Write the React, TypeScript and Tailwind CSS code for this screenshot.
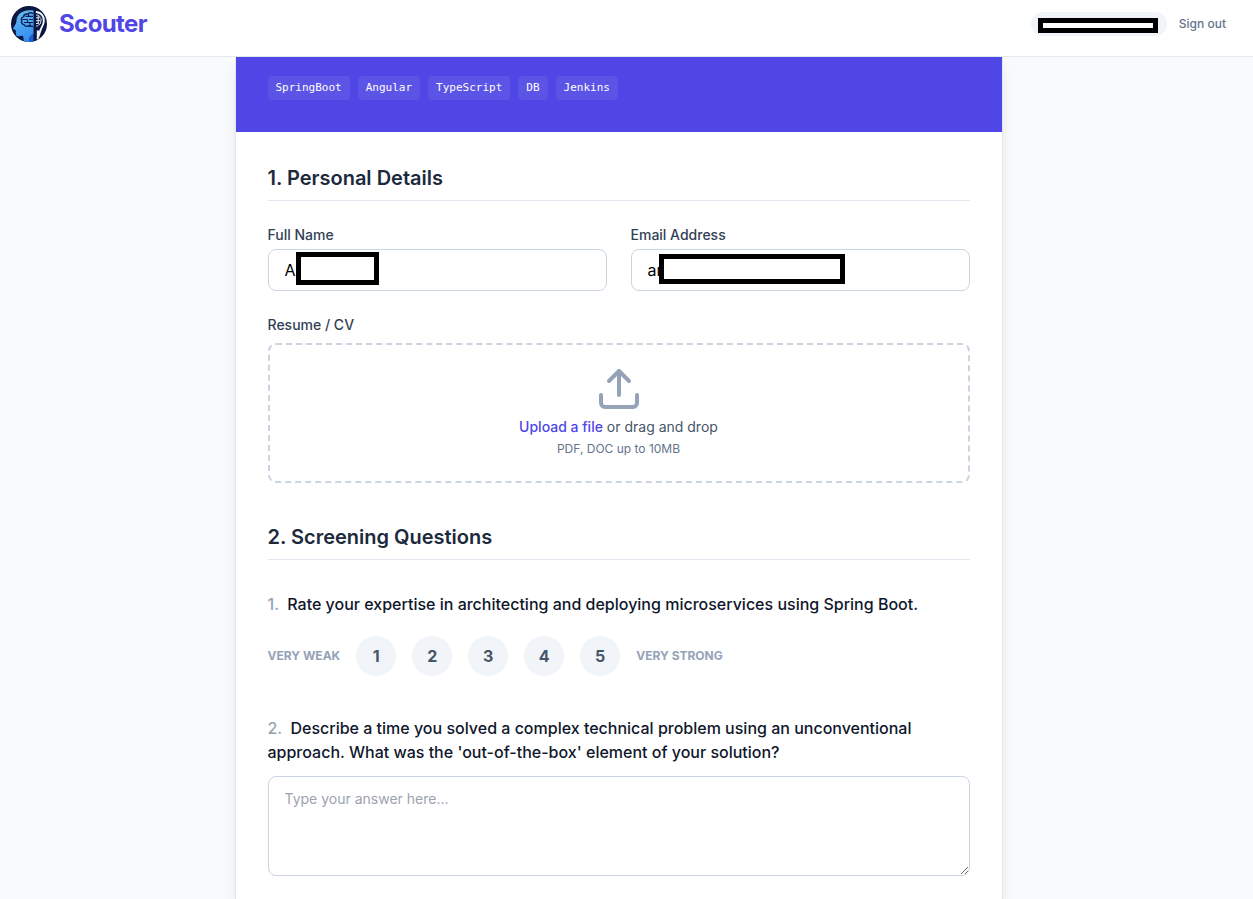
import { useState } from "react";
import type { ReactNode } from "react";
import { Upload } from "lucide-react";

const skills = ["SpringBoot", "Angular", "TypeScript", "DB", "Jenkins"];
const ratings = [1, 2, 3, 4, 5];

function Logo() {
  return (
    <svg className="size-9 shrink-0" viewBox="0 0 36 36" fill="none" aria-hidden="true">
      <defs>
        <linearGradient id="head" x1="8" y1="4" x2="20" y2="36" gradientUnits="userSpaceOnUse">
          <stop stopColor="#6db8f0" />
          <stop offset="0.5" stopColor="#4aa3f0" />
          <stop offset="1" stopColor="#2f86f0" />
        </linearGradient>
        <clipPath id="disc">
          <circle cx="18" cy="18" r="18" />
        </clipPath>
      </defs>
      <circle cx="18" cy="18" r="18" fill="#0a1640" />
      <g clipPath="url(#disc)">
        <path d="M22.500 4.500C13 2.800 6 7.500 5.500 14c0 2-.5 3.500-1.500 5.300L2.200 22.300c-.3.700.2 1.100 1 1.300l1.500.3.300 4.600c.1 1.400 1 1.800 2.600 1.700l4.400-.5 1 6.300H18c0-4 1-6 4.500-8z" fill="url(#head)" />
        <path d="M18 36c0-4 1-6.500 4.500-8.500V36z" fill="#1c5fcb" />
        <path d="M22 7.500c-2-1-4.200-.7-5.200.5-2.200-.2-4 1-4.200 2.600-2 .8-2.700 2.600-1.900 4.300-.5 1.900.5 3.500 2.400 3.900.9 1.400 3 2 4.500 1.100l4.400.6" stroke="#0e2359" strokeWidth="1.500" />
        <path d="M14.500 10.300H22M11.500 13.500h5M18 13.500h4M13 16.500h9M17.500 8v2.300M16.500 13.500v3M19 16.500v3.500" stroke="#0e2359" strokeWidth="1.200" />
        <path d="M25.500 6c5 .6 7.800 4.600 7.300 9.500-.3 3.500-2 5.500-3 7.800-1.300 3.200-1.300 6-3.300 9.200" stroke="#f3f7fc" strokeWidth="1.900" strokeLinecap="round" />
        <path d="M25.800 24.500h2.700c-.2 3-1 5.500-2.700 8z" fill="#f3f7fc" />
        <path d="M23.800 4.500V35" stroke="#0a1640" strokeWidth="1.500" />
        <path d="M25 9c2.300-.2 3.800.8 4 2.500 1.300 1 1.500 2.800.7 4.100.2 1.900-.8 3-2.200 3.300-.7 1-1.500 1.400-2.500 1.200M25 11.800h3.500M25 14.700h4.700M25 17.400h3.200M27.200 9.500v8.500" stroke="#dfe9f5" strokeWidth="1" />
      </g>
    </svg>
  );
}

function SectionTitle({ children }: { children: ReactNode }) {
  return <h2 className="border-b border-slate-200 pb-2 text-xl font-semibold text-slate-800">{children}</h2>;
}

function Field({ id, label, type, value, mask }: { id: string; label: string; type: string; value: string; mask: string }) {
  const [text, setText] = useState(value);

  return (
    <div>
      <label htmlFor={id} className="mb-1 block text-sm font-medium text-[#334155]">
        {label}
      </label>
      <div className="relative">
        <input
          id={id}
          type={type}
          value={text}
          onChange={(e) => setText(e.target.value)}
          className="block w-full rounded-lg border border-[#cbd5e1] bg-white px-4 py-2 text-base text-black outline-none focus:border-[#4f46e5]"
        />
        <span className={`absolute border-5 border-black bg-white ${mask}`} />
      </div>
    </div>
  );
}

export default function App() {
  const [rating, setRating] = useState<number | null>(null);

  return (
    <div className="flex min-h-screen flex-col bg-[#f8fafc] font-['Inter',sans-serif] text-slate-900">
      <header className="flex items-center justify-between border-b border-slate-200 bg-white pt-1.5 pr-[27px] pb-3.5 pl-[11px]">
        <a href="#" className="flex items-center gap-3">
          <Logo />
          <span className="text-2xl font-bold tracking-tight text-[#4f46e5]">Scouter</span>
        </a>
        <div className="flex items-center gap-3">
          <div className="relative h-6 w-34 rounded-full bg-slate-100">
            <span className="absolute top-1.5 left-[7px] h-[15px] w-30 border-5 border-black bg-white" />
          </div>
          <button type="button" className="text-xs font-medium text-[#64748b] hover:text-slate-700">
            Sign out
          </button>
        </div>
      </header>

      <main className="flex grow flex-col pr-4">
        <div className="mx-auto w-full max-w-3xl grow border-x border-slate-200 bg-white shadow-lg">
          <div className="bg-[#4f46e5] px-8 pt-[19px] pb-8">
            <ul className="flex flex-wrap gap-2">
              {skills.map((skill) => (
                <li key={skill} className="rounded bg-white/8 px-2 py-1 font-['DejaVu_Sans_Mono',monospace] text-[11px] leading-4 text-white">
                  {skill}
                </li>
              ))}
            </ul>
          </div>

          <form className="space-y-10 px-8 pt-8 pb-6" onSubmit={(e) => e.preventDefault()}>
            <section>
              <SectionTitle>1. Personal Details</SectionTitle>
              <div className="mt-6 grid gap-6 sm:grid-cols-2">
                <Field id="name" label="Full Name" type="text" value="A" mask="left-7 top-[3px] h-[33px] w-[83px]" />
                <Field id="email" label="Email Address" type="text" value="ar" mask="left-7 top-[5px] h-[30px] w-[186px]" />
              </div>

              <div className="mt-6">
                <p className="mb-2 text-sm font-medium text-[#334155]">Resume / CV</p>
                <div className="flex flex-col items-center gap-1 rounded-lg border-2 border-dashed border-[#cbd5e1] px-6 pt-5 pb-6">
                  <Upload className="size-12 text-[#94a3b8]" strokeWidth={2} />
                  <p className="text-sm text-[#475569]">
                    <label htmlFor="resume" className="cursor-pointer font-medium text-[#4f46e5]">
                      Upload a file
                    </label>{" "}
                    or drag and drop
                  </p>
                  <input id="resume" type="file" accept=".pdf,.doc" className="sr-only" />
                  <p className="text-xs text-[#64748b]">PDF, DOC up to 10MB</p>
                </div>
              </div>
            </section>

            <section>
              <SectionTitle>2. Screening Questions</SectionTitle>
              <div className="mt-8 space-y-10">
                <div>
                  <p id="q1" className="font-medium">
                    <span className="mr-1 text-[#94a3b8]">1.</span> Rate your expertise in architecting and deploying microservices using Spring Boot.
                  </p>
                  <div role="group" aria-labelledby="q1" className="mt-5 flex items-center gap-4">
                    <span className="text-xs font-bold text-[#94a3b8] uppercase">Very weak</span>
                    {ratings.map((n) => (
                      <button
                        key={n}
                        type="button"
                        onClick={() => setRating(n)}
                        className={`size-10 rounded-full font-bold ${rating === n ? "bg-[#4f46e5] text-white" : "bg-slate-100 text-[#475569]"}`}
                      >
                        {n}
                      </button>
                    ))}
                    <span className="text-xs font-bold text-[#94a3b8] uppercase">Very strong</span>
                  </div>
                </div>

                <div>
                  <label htmlFor="q2" className="block font-medium">
                    <span className="mr-1 text-[#94a3b8]">2.</span> Describe a time you solved a complex technical problem using an unconventional approach. What was the 'out-of-the-box' element of your solution?
                  </label>
                  <textarea
                    id="q2"
                    placeholder="Type your answer here..."
                    className="mt-3 block min-h-25 w-full rounded-lg border border-[#cbd5e1] bg-white px-4 py-3 text-sm outline-none placeholder:text-[#9ca3af] focus:border-[#4f46e5]"
                  />
                </div>
              </div>
            </section>
          </form>
        </div>
      </main>
    </div>
  );
}
